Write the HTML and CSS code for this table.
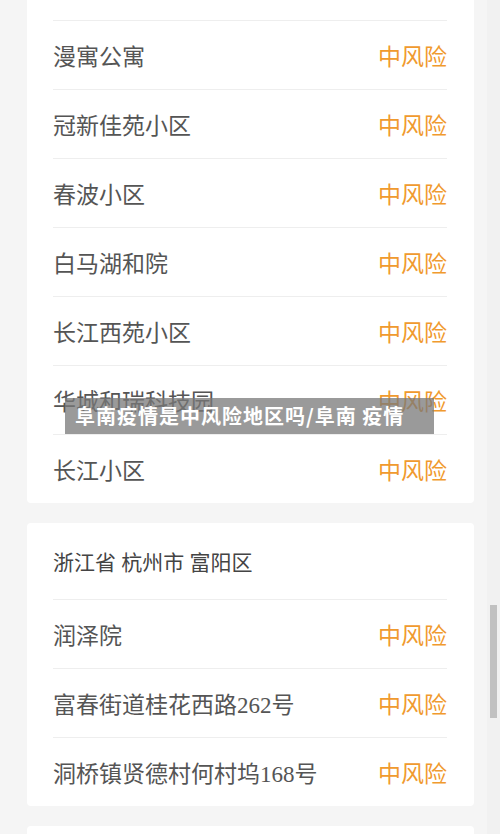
FILE: index.html
```html
<!DOCTYPE html>
<html lang="zh-CN">
<head>
  <meta charset="UTF-8">
  <title>阜南疫情是中风险地区吗/阜南 疫情</title>
  <meta name="viewport" content="width=device-width, initial-scale=1">
  <link rel="stylesheet" href="styles.css">
</head>
<body>
  <!-- 风险地区列表 -->
  <div class="list">
    <div class="card card-first">
      <div class="row"><span class="name">阜南县城区</span><span class="level">中风险</span></div>
      <div class="row"><span class="name">漫寓公寓</span><span class="level">中风险</span></div>
      <div class="row"><span class="name">冠新佳苑小区</span><span class="level">中风险</span></div>
      <div class="row"><span class="name">春波小区</span><span class="level">中风险</span></div>
      <div class="row"><span class="name">白马湖和院</span><span class="level">中风险</span></div>
      <div class="row"><span class="name">长江西苑小区</span><span class="level">中风险</span></div>
      <div class="row"><span class="name">华城和瑞科技园</span><span class="level">中风险</span></div>
      <div class="row"><span class="name">长江小区</span><span class="level">中风险</span></div>
    </div>

    <div class="card">
      <div class="card-head">浙江省 杭州市 富阳区</div>
      <div class="row"><span class="name">润泽院</span><span class="level">中风险</span></div>
      <div class="row"><span class="name">富春街道桂花西路262号</span><span class="level">中风险</span></div>
      <div class="row"><span class="name">洞桥镇贤德村何村坞168号</span><span class="level">中风险</span></div>
    </div>

    <div class="card">
      <div class="card-head">浙江省 杭州市 西湖区</div>
    </div>
  </div>

  <!-- 标题遮罩 -->
  <div class="caption">阜南疫情是中风险地区吗/阜南 疫情</div>

  <!-- 滚动条 -->
  <div class="scroll-track"><div class="scroll-thumb"></div></div>
</body>
</html>
```

FILE: styles.css
```css
/* Global Styles */
html, body {
  height: 100%;
  overflow: hidden;
}
body {
  margin: 0;
  padding: 0;
  background-color: #f5f5f5;
  color: #555;
  font-family: "Liberation Serif", "Noto Sans CJK SC", serif;
  position: relative;
}
.list {
  padding: 0 26px 0 27px;
}
.card {
  background-color: #fff;
  border-radius: 4px;
  padding: 0 27px 0 26px;
  margin-bottom: 20px;
}
.card-first {
  margin-top: -49px;
  border-radius: 0 0 4px 4px;
}
.row {
  display: flex;
  justify-content: space-between;
  align-items: center;
  height: 68px;
  border-top: 1px solid #eee;
  font-size: 23px;
}
.card-first .row:first-child {
  border-top: none;
  height: 69px;
}
.name {
  color: #555;
}
.level {
  color: #f09a2e;
}
.card-head {
  height: 76px;
  display: flex;
  align-items: center;
  font-size: 21px;
  color: #444;
}
/* caption overlay */
.caption {
  position: absolute;
  top: 398px;
  left: 65px;
  width: 359px;
  height: 36px;
  line-height: 36px;
  padding-left: 10px;
  background-color: rgba(120, 120, 120, 0.75);
  color: #fff;
  font-family: "Noto Sans CJK SC", sans-serif;
  font-weight: bold;
  font-size: 20px;
  letter-spacing: 1px;
  white-space: nowrap;
}
/* fake scrollbar */
.scroll-track {
  position: absolute;
  top: 0;
  right: 0;
  width: 13px;
  height: 100%;
  background-color: #f1f1f1;
}
.scroll-thumb {
  position: absolute;
  top: 605px;
  left: 3px;
  width: 7px;
  height: 113px;
  background-color: #c1c1c1;
}
```
